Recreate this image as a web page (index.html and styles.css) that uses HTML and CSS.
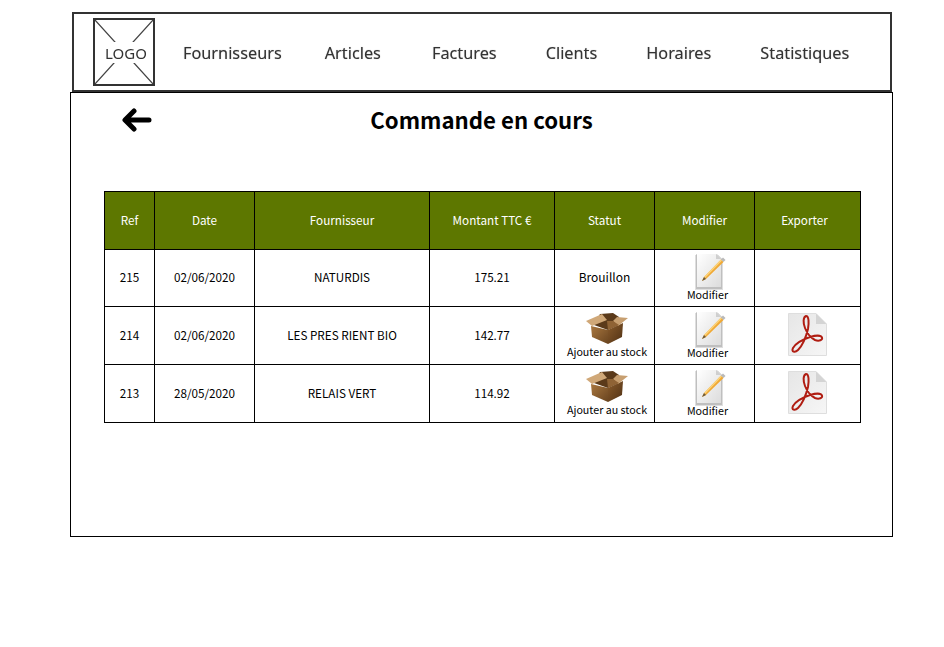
FILE: index.html
```html
<!DOCTYPE html>
<html lang="fr">
<head>
    <meta charset="UTF-8">
    <meta name="viewport" content="width=device-width, initial-scale=1.0">
    <title>Commande en cours</title>
    <link rel="stylesheet" href="styles.css">
</head>
<body>
    <!-- Icones reutilisees dans le tableau -->
    <svg class="defs" width="0" height="0" aria-hidden="true">
        <defs>
            <linearGradient id="boxFront" x1="0" y1="0" x2="1" y2="1">
                <stop offset="0" stop-color="#a9773f"/>
                <stop offset="1" stop-color="#6a4520"/>
            </linearGradient>
            <linearGradient id="boxSide" x1="0" y1="0" x2="1" y2="1">
                <stop offset="0" stop-color="#8a5c2c"/>
                <stop offset="1" stop-color="#4f3014"/>
            </linearGradient>
            <linearGradient id="paper" x1="0" y1="0" x2="1" y2="1">
                <stop offset="0" stop-color="#ffffff"/>
                <stop offset="1" stop-color="#dcdcdc"/>
            </linearGradient>
            <linearGradient id="pdfPaper" x1="0" y1="0" x2="1" y2="1">
                <stop offset="0" stop-color="#e6e6e6"/>
                <stop offset="1" stop-color="#f6f6f6"/>
            </linearGradient>
            <symbol id="icon-box" viewBox="0 0 42 32">
                <path d="M14 1 L27 0 L33 4 L33 12 L22 17 L8 12 Z" fill="#5b3a1a"/>
                <path d="M5 13 L22 17 L22 31 L6 24 Z" fill="url(#boxFront)"/>
                <path d="M22 17 L37 10 L36 24 L22 31 Z" fill="url(#boxSide)"/>
                <path d="M0 8 L16 1 L21 7 L6 13 Z" fill="#d0a878"/>
                <path d="M31 4 L42 5 L32 13 L27 8 Z" fill="#c79f70"/>
                <path d="M21 8 L27 8 L33 12 L22 17 Z" fill="#8f6335"/>
            </symbol>
            <symbol id="icon-edit" viewBox="0 0 32 36">
                <path d="M0 1 H23 L28 6 V36 H0 Z" fill="#8a8a8a" opacity=".28"/>
                <path d="M1 0 H22 L27 5 V35 H1 Z" fill="#777" opacity=".3"/>
                <path d="M2 0 H21 L26 5 V33 H2 Z" fill="url(#paper)"/>
                <path d="M21 0 L26 5 H21 Z" fill="#cfcfcf"/>
                <path d="M7 27 L9 23 L26 5.5 L28.5 8 L11 25 Z" fill="#f0a935"/>
                <path d="M9 23 L26 5.5 L27 6.5 L10 24 Z" fill="#fbd47e"/>
                <path d="M26 5.5 L28 3.5 L30.5 6 L28.5 8 Z" fill="#b9b9b9"/>
                <path d="M7 27 L9 23 L11 25 Z" fill="#6b5a3c"/>
            </symbol>
            <symbol id="icon-pdf" viewBox="0 0 39 43">
                <path d="M.5 .5 H28 L38.5 11 V42.5 H.5 Z" fill="url(#pdfPaper)" stroke="#dedede"/>
                <path d="M28 .5 L38.5 11 H28 Z" fill="#d4d4d4"/>
                <path d="M18 3 C15 4 15 10 17 15 C19 20 23 25 27 27 C31 28.5 35 27 34 24.5 C33 22 27 22.5 22 24 C16 26 8 30 5 35 C3 39 7 40 10 37 C14 33 18 24 20 16 C21 10 21 3 18 3 Z" fill="none" stroke="#b01d12" stroke-width="2"/>
            </symbol>
        </defs>
    </svg>

    <header class="topbar">
        <div class="logo">
            <svg class="logo-cross" viewBox="0 0 58 63" preserveAspectRatio="none" aria-hidden="true">
                <path d="M0 0 L58 63 M58 0 L0 63" stroke="#444" stroke-width="1.2"/>
            </svg>
            <span class="logo-text">LOGO</span>
        </div>
        <nav class="menu">
            <a href="#">Fournisseurs</a>
            <a href="#">Articles</a>
            <a href="#">Factures</a>
            <a href="#">Clients</a>
            <a href="#">Horaires</a>
            <a href="#">Statistiques</a>
        </nav>
    </header>

    <main class="container">
        <div class="page-head">
            <a href="#" class="back" aria-label="Retour">
                <svg width="30" height="24" viewBox="0 0 30 24">
                    <path d="M12 3 L3 12 L12 21 M4 12 H27" fill="none" stroke="#000" stroke-width="5" stroke-linecap="round" stroke-linejoin="round"/>
                </svg>
            </a>
            <h1>Commande en cours</h1>
        </div>

        <table class="orders">
            <colgroup>
                <col class="c-ref"><col class="c-date"><col class="c-supplier"><col class="c-amount">
                <col class="c-status"><col class="c-edit"><col class="c-export">
            </colgroup>
            <thead>
                <tr>
                    <th>Ref</th>
                    <th>Date</th>
                    <th>Fournisseur</th>
                    <th>Montant TTC €</th>
                    <th>Statut</th>
                    <th>Modifier</th>
                    <th class="th-export">Exporter</th>
                </tr>
            </thead>
            <tbody>
                <tr class="first-row">
                    <td>215</td>
                    <td>02/06/2020</td>
                    <td>NATURDIS</td>
                    <td>175.21</td>
                    <td class="status">Brouillon</td>
                    <td><a href="#" class="action action-edit"><svg class="ic-edit"><use href="#icon-edit"/></svg>Modifier</a></td>
                    <td></td>
                </tr>
                <tr>
                    <td>214</td>
                    <td>02/06/2020</td>
                    <td>LES PRES RIENT BIO</td>
                    <td>142.77</td>
                    <td><a href="#" class="action action-stock"><svg class="ic-box"><use href="#icon-box"/></svg>Ajouter au stock</a></td>
                    <td><a href="#" class="action action-edit"><svg class="ic-edit"><use href="#icon-edit"/></svg>Modifier</a></td>
                    <td><a href="#" class="action"><svg class="ic-pdf"><use href="#icon-pdf"/></svg></a></td>
                </tr>
                <tr>
                    <td>213</td>
                    <td>28/05/2020</td>
                    <td>RELAIS VERT</td>
                    <td>114.92</td>
                    <td><a href="#" class="action action-stock"><svg class="ic-box"><use href="#icon-box"/></svg>Ajouter au stock</a></td>
                    <td><a href="#" class="action action-edit"><svg class="ic-edit"><use href="#icon-edit"/></svg>Modifier</a></td>
                    <td><a href="#" class="action"><svg class="ic-pdf"><use href="#icon-pdf"/></svg></a></td>
                </tr>
            </tbody>
        </table>
    </main>
</body>
</html>
```

FILE: styles.css
```css
/* Reset */
* {
    margin: 0;
    padding: 0;
    box-sizing: border-box;
}

body {
    font-family: "Noto Sans CJK JP", "Noto Sans", sans-serif;
    background-color: #fff;
    color: #000;
    padding-top: 12px;
}

a {
    color: inherit;
    text-decoration: none;
}

.defs {
    display: block;
    height: 0;
}

/* Barre du haut */
.topbar {
    display: flex;
    align-items: center;
    width: 820px;
    height: 80px;
    margin-left: 72px;
    padding-left: 19px;
    border: 2px solid #333;
}

.logo {
    position: relative;
    display: flex;
    align-items: center;
    justify-content: center;
    width: 62px;
    height: 68px;
    border: 2px solid #333;
    flex-shrink: 0;
}

.logo-cross {
    position: absolute;
    inset: 0;
    width: 100%;
    height: 100%;
}

.logo-text {
    position: relative;
    padding: 1px 0 0 4px;
    background: #fff;
    font-family: "Noto Sans", sans-serif;
    font-size: 15px;
    line-height: 20px;
    color: #333;
    filter: blur(0.3px);
}

.menu {
    display: flex;
    gap: 49px;
    margin: 1px 0 0 28px;
    font-family: "Noto Sans", sans-serif;
    font-size: 16.3px;
    line-height: 22px;
    color: #333;
    text-shadow: 0 0 1px rgba(0, 0, 0, 0.35);
    filter: blur(0.3px);
}

.menu a:nth-child(1) {
    margin-right: -6px;
}

.menu a:nth-child(2) {
    margin-right: 2px;
}

/* Contenu */
.container {
    width: 823px;
    height: 445px;
    margin-left: 70px;
    border: 1px solid #000;
}

.page-head {
    position: relative;
    padding-top: 8px;
    text-align: center;
}

.page-head h1 {
    font-size: 22.2px;
    font-weight: 700;
    line-height: 36px;
}

.back {
    position: absolute;
    left: 51px;
    top: 15px;
    line-height: 0;
}

/* Tableau */
.orders {
    width: 756px;
    margin: 54px 0 0 33px;
    border-collapse: collapse;
    table-layout: fixed;
    font-size: 11.7px;
    line-height: 14px;
    text-align: center;
}

.c-ref { width: 50px; }
.c-date { width: 100px; }
.c-supplier { width: 175px; }
.c-amount { width: 125px; }
.c-status { width: 100px; }
.c-edit { width: 100px; }
.c-export { width: 106px; }

.orders th,
.orders td {
    border: 1px solid #000;
    vertical-align: middle;
    padding-bottom: 2px;
}

.orders th {
    height: 58px;
    background-color: #5d7700;
    color: #fff;
    font-weight: 400;
}

.orders .th-export {
    padding-right: 6px;
}

.orders td {
    height: 58px;
}

.orders .first-row td {
    height: 57px;
}

.orders td.status {
    font-size: 12px;
}

.action {
    display: flex;
    flex-direction: column;
    align-items: center;
    font-size: 10.7px;
    line-height: 13px;
}

.action-stock {
    padding-left: 5px;
}

.action-edit {
    padding-left: 6px;
}

.ic-box {
    width: 42px;
    height: 32px;
    margin-top: 1px;
}

.ic-edit {
    width: 32px;
    height: 36px;
    margin: 2px 0 -2px 7px;
}

.first-row .ic-edit {
    margin-top: 1px;
}

.ic-pdf {
    width: 39px;
    height: 43px;
}
```
